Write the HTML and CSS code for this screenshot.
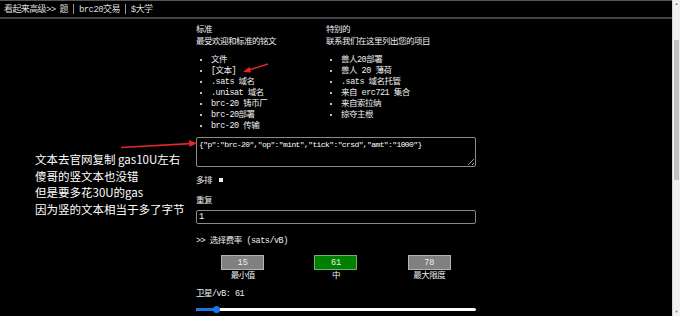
FILE: index.html
```html
<!DOCTYPE html>
<html lang="zh">
<head>
  <meta charset="UTF-8">
  <title>brc20 铭文</title>
  <link rel="stylesheet" href="styles.css">
</head>
<body>
  <div class="page">
    <!-- Top navigation -->
    <header class="topbar">
      <span>看起来高级&gt;&gt;</span>
      <span>题</span>
      <span class="sep"></span>
      <span>brc20交易</span>
      <span class="sep"></span>
      <span>$大学</span>
    </header>

    <main class="wrap">
      <div class="cols">
        <div class="col">
          <div class="intro">标准<br>最受欢迎和标准的铭文</div>
          <ul class="list">
            <li>文件</li>
            <li>[文本]</li>
            <li>.sats 域名</li>
            <li>.unisat 域名</li>
            <li>brc-20 铸币厂</li>
            <li>brc-20部署</li>
            <li>brc-20 传输</li>
          </ul>
        </div>
        <div class="col">
          <div class="intro">特别的<br>联系我们在这里列出您的项目</div>
          <ul class="list">
            <li>兽人20部署</li>
            <li>兽人 20 薄荷</li>
            <li>.sats 域名托管</li>
            <li>来自 erc721 集合</li>
            <li>来自索拉纳</li>
            <li>掠夺主根</li>
          </ul>
        </div>
      </div>

      <textarea class="json">{"p":"brc-20","op":"mint","tick":"crsd","amt":"1000"}</textarea>

      <div class="row gap8">多排 <span class="box"></span></div>
      <div class="row gap8">重复</div>
      <input class="repeat" type="text" value="1">

      <div class="row title">&gt;&gt; 选择费率 (sats/vB)</div>
      <div class="fees">
        <div class="fee"><button class="fee-btn">15</button><span>最小值</span></div>
        <div class="fee"><button class="fee-btn active">61</button><span>中</span></div>
        <div class="fee"><button class="fee-btn">78</button><span>最大限度</span></div>
      </div>

      <div class="row sat">卫星/vB: 61</div>
      <div class="slider">
        <div class="fill" style="width: 7%"></div>
        <div class="knob" style="left: 7%"></div>
      </div>
    </main>

    <!-- Annotation laid over the page -->
    <div class="note">
      文本去官网复制 gas10U左右<br>
      傻哥的竖文本也没错<br>
      但是要多花30U的gas<br>
      因为竖的文本相当于多了字节
    </div>
    <svg class="arrows" width="673" height="316" viewBox="0 0 673 316">
      <line x1="121" y1="147.5" x2="190" y2="143.6" stroke="#e3262a" stroke-width="1.6"/>
      <polygon points="197,143.2 189,140 189.4,147" fill="#e3262a"/>
      <line x1="268" y1="64" x2="249" y2="70" stroke="#e3262a" stroke-width="1.4"/>
      <polygon points="243,72 249.5,66.8 251,72.4" fill="#e3262a"/>
    </svg>
  </div>

  <div class="scrollbar">
    <span class="sb-arrow">▲</span>
    <div class="sb-thumb"></div>
    <span class="sb-arrow">▼</span>
  </div>
</body>
</html>
```

FILE: styles.css
```css
*, *::before, *::after {
  box-sizing: border-box;
}

body {
  margin: 0;
  background-color: #000;
  color: #eee;
  font-family: "Liberation Mono", "Noto Sans CJK SC", monospace;
  font-size: 8.5px;
  letter-spacing: -0.5px;
  display: flex;
  height: 316px;
  overflow: hidden;
}

.page {
  flex: 1;
  position: relative;
}

/* Top bar */
.topbar {
  height: 19px;
  border-top: 1px solid #555;
  border-bottom: 2px solid #444;
  padding: 0 4px 1px;
  display: flex;
  align-items: center;
  gap: 4px;
  font-size: 9px;
  letter-spacing: -0.6px;
  color: #ddd;
}

.sep {
  width: 1px;
  height: 10px;
  background-color: #999;
  margin: 0 1px;
}

/* Main column */
.wrap {
  width: 280px;
  margin: 0 auto;
  padding-top: 5px;
  line-height: 12px;
}

.cols {
  display: grid;
  grid-template-columns: 130px 1fr;
}

.list {
  margin: 7px 0 0;
  padding-left: 15px;
  line-height: 11px;
}

.list li::marker {
  color: #fff;
}

.json {
  display: block;
  width: 100%;
  height: 30px;
  margin-top: 5px;
  padding: 2px 2px;
  background-color: #000;
  color: #fff;
  border: 1px solid #8a8a8a;
  border-radius: 2px;
  font: inherit;
  font-size: 8px;
  line-height: 10px;
  letter-spacing: -0.6px;
}

.row {
  line-height: 12px;
}

.gap8 {
  margin-top: 8px;
}

.box {
  display: inline-block;
  width: 4px;
  height: 4px;
  margin-left: 2px;
  background-color: #eee;
  vertical-align: 1px;
}

.repeat {
  display: block;
  width: 100%;
  height: 14px;
  margin-top: 3px;
  padding: 0 2px;
  background-color: #000;
  color: #fff;
  border: 1px solid #8a8a8a;
  border-radius: 2px;
  font: inherit;
}

.title {
  margin-top: 11px;
}

/* Fee rate buttons */
.fees {
  display: flex;
  justify-content: space-around;
  margin-top: 8px;
}

.fee {
  display: flex;
  flex-direction: column;
  align-items: center;
  line-height: 12px;
}

.fee-btn {
  width: 43px;
  height: 15px;
  padding: 0;
  background-color: #808080;
  color: #eee;
  border: 1px solid #b4b4b4;
  font: inherit;
}

.fee-btn.active {
  background-color: #008000;
  border-color: #6fb06f;
}

.sat {
  margin-top: 6px;
}

/* Range slider */
.slider {
  position: relative;
  height: 3px;
  margin-top: 8px;
  background-color: #fff;
  border-radius: 2px;
}

.fill {
  height: 100%;
  background-color: #1a73e8;
  border-radius: 2px;
}

.knob {
  position: absolute;
  top: -2px;
  width: 7px;
  height: 7px;
  margin-left: -3px;
  background-color: #1a73e8;
  border-radius: 50%;
}

/* Annotation */
.note {
  position: absolute;
  left: 35px;
  top: 151px;
  font-family: "Noto Sans CJK SC", "Noto Sans", sans-serif;
  font-size: 11.5px;
  line-height: 16.6px;
  letter-spacing: 0;
  color: #fff;
}

.arrows {
  position: absolute;
  left: 0;
  top: 0;
  pointer-events: none;
}

/* Fake scrollbar */
.scrollbar {
  width: 8px;
  display: flex;
  flex-direction: column;
  justify-content: space-between;
  align-items: center;
  background-color: #f0f0f0;
  border-left: 1px solid #d8d8d8;
}

.sb-arrow {
  font-size: 4px;
  line-height: 8px;
  color: #777;
  letter-spacing: 0;
}

.sb-thumb {
  width: 5px;
  height: 140px;
  margin-bottom: 96px;
  background-color: #c1c1c1;
}
```
